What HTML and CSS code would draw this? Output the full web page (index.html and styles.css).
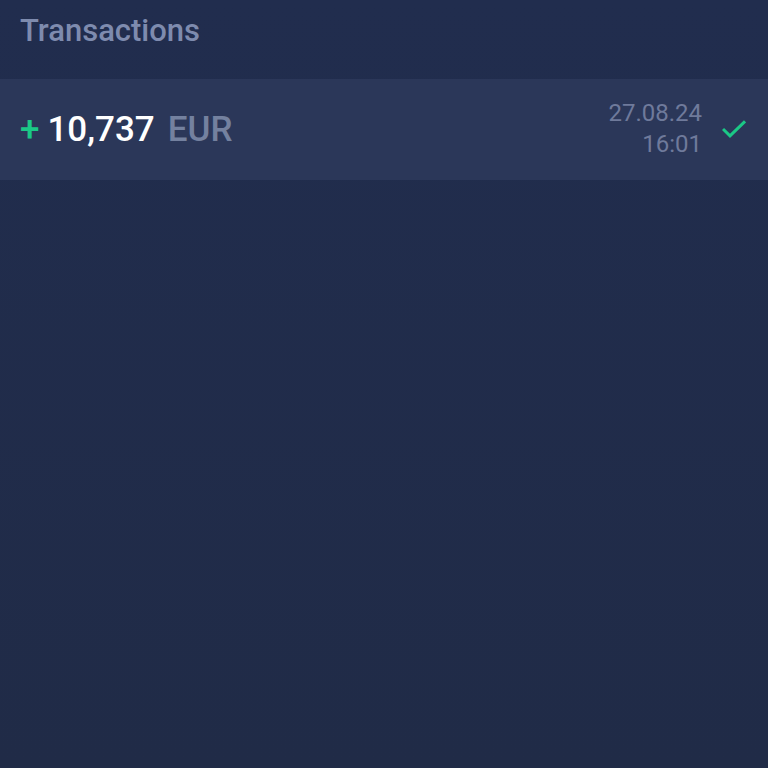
FILE: index.html
```html
<!DOCTYPE html>
<html lang="en">
<head>
<meta charset="utf-8">
<meta name="viewport" content="width=device-width, initial-scale=1">
<title>Transactions</title>
<link rel="stylesheet" href="styles.css">
</head>
<body>
<main class="page">
  <h1 class="title">Transactions</h1>
  <ul class="list">
    <li class="transaction">
      <div class="amount">
        <span class="sign">+</span>
        <span class="value">10,737</span>
        <span class="currency">EUR</span>
      </div>
      <time class="date" datetime="2024-08-27T16:01">
        <span>27.08.24</span>
        <span>16:01</span>
      </time>
      <svg class="check" viewBox="0 0 24 18" role="img" aria-label="Completed">
        <path d="M1 9 8 15.8 23 1.3"/>
      </svg>
    </li>
  </ul>
</main>
</body>
</html>
```

FILE: styles.css
```css
* {
  box-sizing: border-box;
}

body {
  margin: 0;
  font-family: Roboto, sans-serif;
  background: #212b49;
}

.page {
  min-height: 100vh;
  background: linear-gradient(#212d4e, #202b47);
}

.title {
  margin: 0;
  padding: 13px 20px 30px;
  font-size: 31px;
  font-weight: 500;
  line-height: 36px;
  color: #7e8bae;
}

.list {
  margin: 0;
  padding: 0;
  list-style: none;
}

.transaction {
  display: flex;
  align-items: center;
  padding: 19px 22px 20px 20px;
  background: #2b3759;
}

.amount {
  display: flex;
  flex: 1;
  align-items: center;
  font-size: 35px;
  font-weight: 500;
  line-height: 41px;
}

.sign {
  margin-right: 8px;
  color: #1bc886;
}

.value {
  margin-right: 13px;
  color: #fff;
}

.currency {
  color: #74819f;
}

.date {
  display: flex;
  flex-direction: column;
  margin-right: 20px;
  font-size: 24px;
  line-height: 31px;
  text-align: right;
  color: #6f7a9b;
}

.check {
  width: 24px;
  height: 18px;
  fill: none;
  stroke: #1bc886;
  stroke-width: 3;
}
```
